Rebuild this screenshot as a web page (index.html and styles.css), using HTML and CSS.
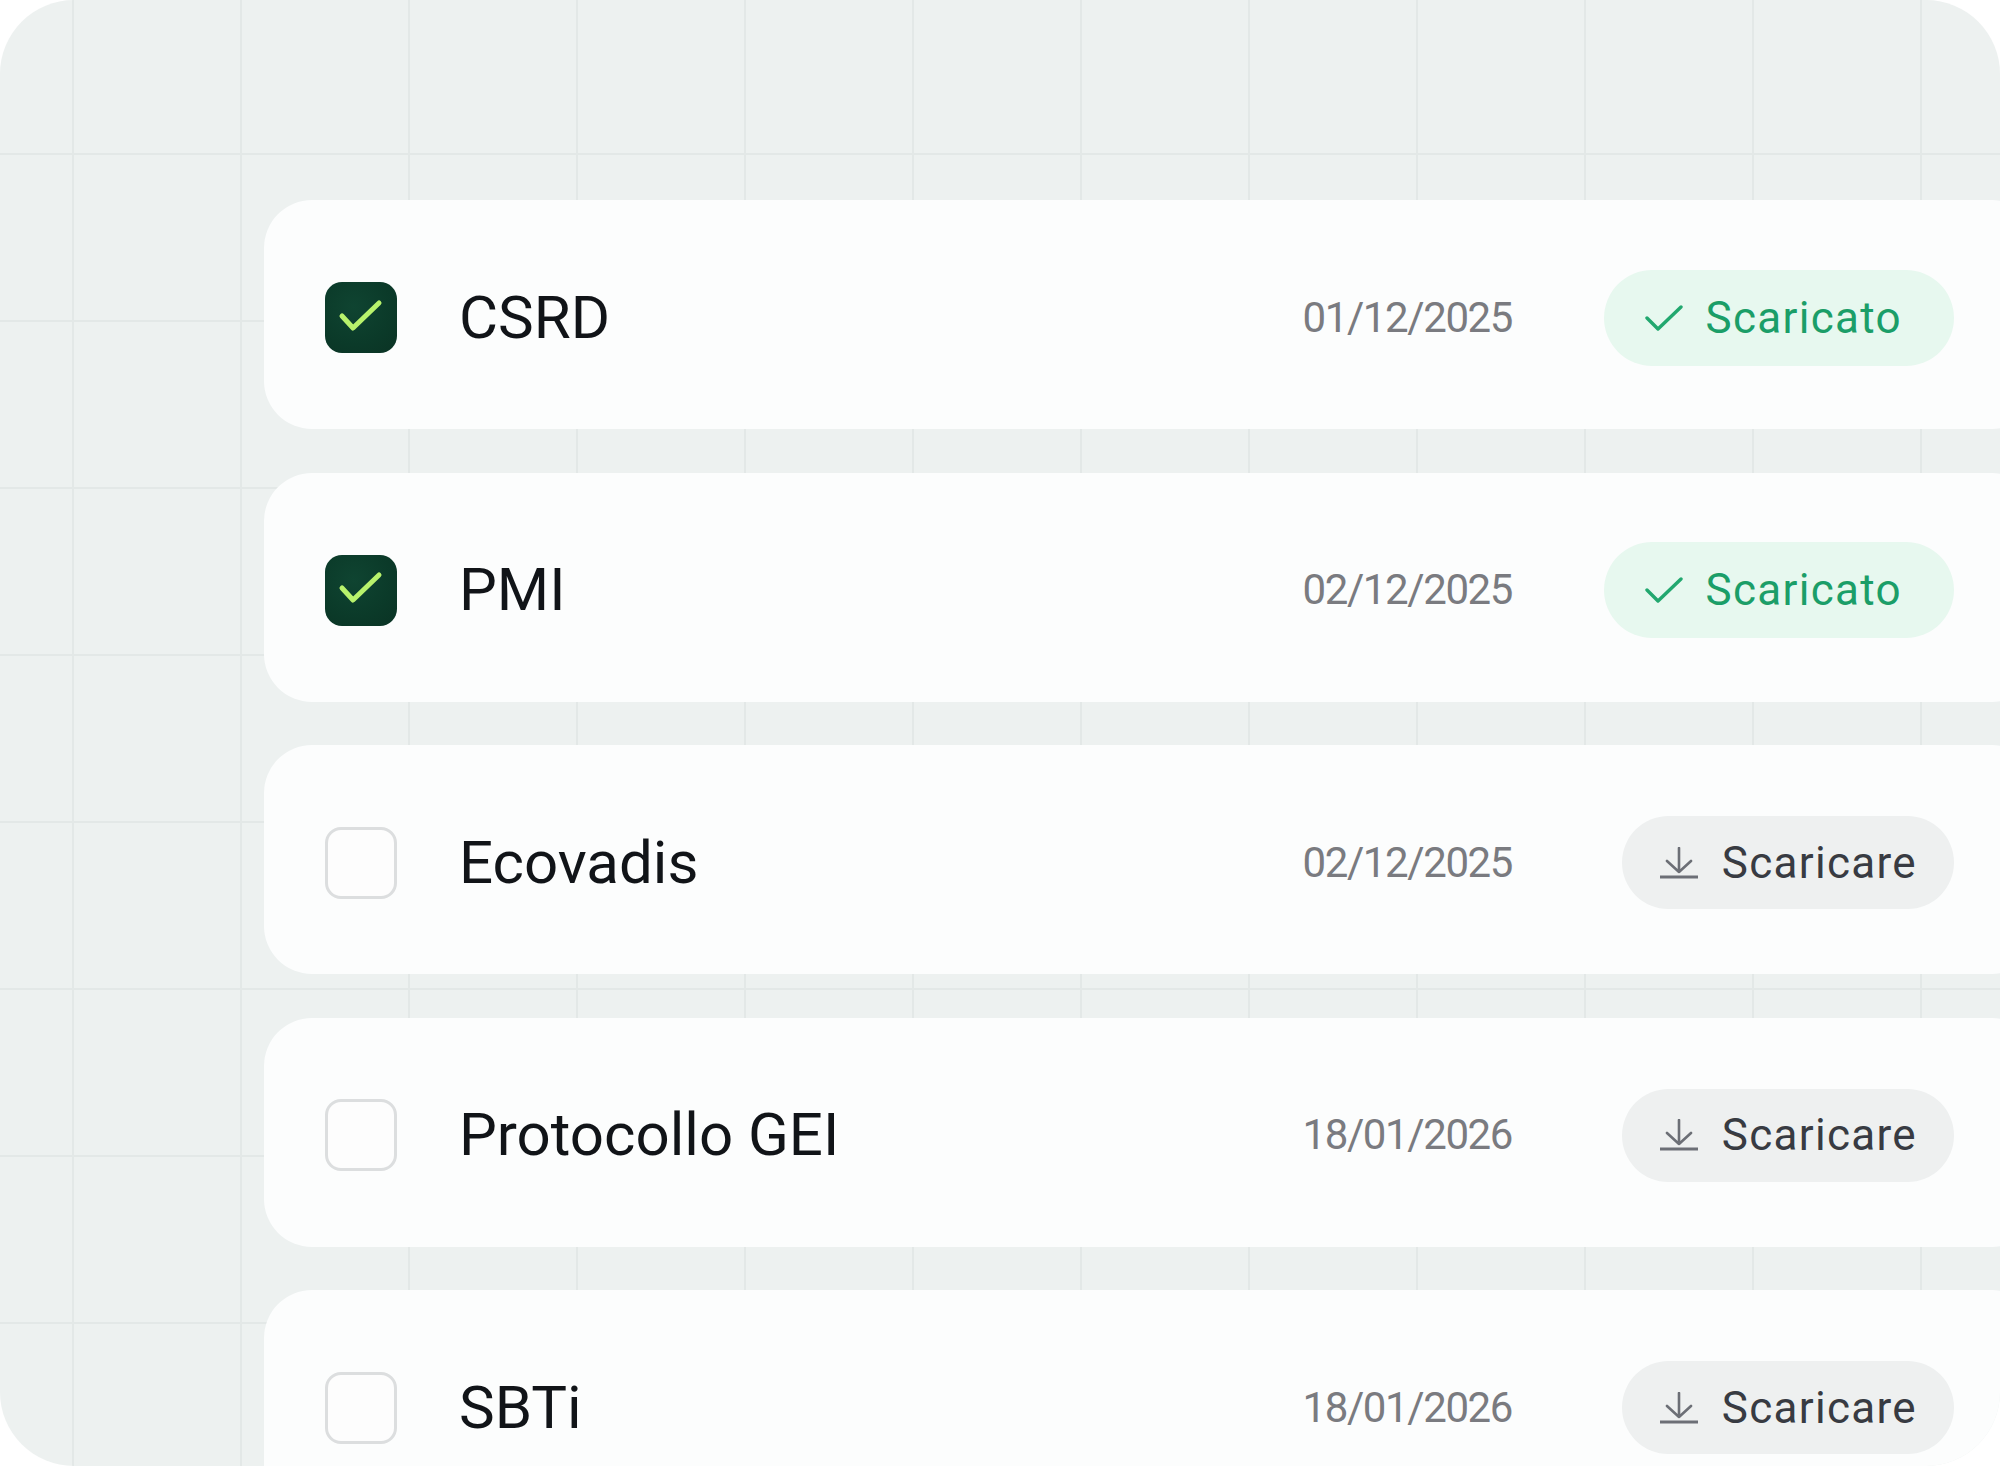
FILE: index.html
```html
<!DOCTYPE html>
<html lang="it">
<head>
<meta charset="utf-8">
<title>Documenti</title>
<link rel="stylesheet" href="styles.css">
</head>
<body>
<div class="frame">
  <div class="list">
    <div class="row">
      <span class="box box--on"><svg viewBox="0 0 72 72" width="72" height="72"><path d="M17 34 L28 46 L54 21" fill="none" stroke="#b8f26c" stroke-width="5" stroke-linecap="round" stroke-linejoin="round"/></svg></span>
      <span class="name">CSRD</span>
      <span class="date">01/12/2025</span>
      <span class="action"><span class="pill pill--done"><svg class="ico-check" viewBox="0 0 38 26" width="38" height="26"><path d="M2 13 L13 24 L36 2" fill="none" stroke="currentColor" stroke-width="3.4" stroke-linecap="round" stroke-linejoin="round"/></svg>Scaricato</span></span>
    </div>
    <div class="row">
      <span class="box box--on"><svg viewBox="0 0 72 72" width="72" height="72"><path d="M17 34 L28 46 L54 21" fill="none" stroke="#b8f26c" stroke-width="5" stroke-linecap="round" stroke-linejoin="round"/></svg></span>
      <span class="name">PMI</span>
      <span class="date">02/12/2025</span>
      <span class="action"><span class="pill pill--done"><svg class="ico-check" viewBox="0 0 38 26" width="38" height="26"><path d="M2 13 L13 24 L36 2" fill="none" stroke="currentColor" stroke-width="3.4" stroke-linecap="round" stroke-linejoin="round"/></svg>Scaricato</span></span>
    </div>
    <div class="row">
      <span class="box"></span>
      <span class="name">Ecovadis</span>
      <span class="date">02/12/2025</span>
      <span class="action"><span class="pill pill--get"><svg class="ico-dl" viewBox="0 0 40 32" width="40" height="32"><path d="M20 1 V25 M8 14 L20 25 L32 14" fill="none" stroke="currentColor" stroke-width="2.6" stroke-linecap="round" stroke-linejoin="round"/><path d="M1 30 H39" stroke="currentColor" stroke-width="3.2"/></svg>Scaricare</span></span>
    </div>
    <div class="row">
      <span class="box"></span>
      <span class="name">Protocollo GEI</span>
      <span class="date">18/01/2026</span>
      <span class="action"><span class="pill pill--get"><svg class="ico-dl" viewBox="0 0 40 32" width="40" height="32"><path d="M20 1 V25 M8 14 L20 25 L32 14" fill="none" stroke="currentColor" stroke-width="2.6" stroke-linecap="round" stroke-linejoin="round"/><path d="M1 30 H39" stroke="currentColor" stroke-width="3.2"/></svg>Scaricare</span></span>
    </div>
    <div class="row">
      <span class="box"></span>
      <span class="name">SBTi</span>
      <span class="date">18/01/2026</span>
      <span class="action"><span class="pill pill--get"><svg class="ico-dl" viewBox="0 0 40 32" width="40" height="32"><path d="M20 1 V25 M8 14 L20 25 L32 14" fill="none" stroke="currentColor" stroke-width="2.6" stroke-linecap="round" stroke-linejoin="round"/><path d="M1 30 H39" stroke="currentColor" stroke-width="3.2"/></svg>Scaricare</span></span>
    </div>
  </div>
</div>
</body>
</html>
```

FILE: styles.css
```css
html, body {
  margin: 0;
  padding: 0;
  background: #ffffff;
}

body {
  font-family: Roboto, "Noto Sans", "Liberation Sans", sans-serif;
}

.frame {
  width: 2000px;
  height: 1466px;
  box-sizing: border-box;
  border-radius: 74px;
  overflow: hidden;
  background-color: #edf1f0;
  background-image:
    linear-gradient(to right, #e3e8e7 2px, transparent 2px),
    linear-gradient(to bottom, #e3e8e7 2px, transparent 2px);
  background-size: 168px 100%, 100% 167px;
  background-position: 72px 0, 0 153px;
  padding: 200px 0 0 264px;
}

.list {
  display: flex;
  flex-direction: column;
  gap: 43.5px;
  margin-right: -40px;
}

.row {
  box-sizing: border-box;
  height: 229px;
  flex: none;
  display: flex;
  align-items: center;
  background: #fcfdfd;
  border-radius: 48px;
  padding: 6px 86px 0 61px;
}

.box {
  width: 66px;
  height: 66px;
  flex: none;
  border: 3px solid #dcdedf;
  border-radius: 16px;
  background: #fdfdfd;
  display: flex;
  align-items: center;
  justify-content: center;
}

.box--on {
  width: 72px;
  height: 71px;
  border: none;
  background: radial-gradient(circle at 40% 35%, #0f4431 0%, #0b3a29 60%, #0a3324 100%);
  border-radius: 17px;
}

.box svg {
  display: block;
}

.name {
  flex: 1;
  margin-left: 62px;
  font-size: 60px;
  line-height: 1;
  color: #111418;
  font-weight: 400;
}

.date {
  font-size: 42px;
  line-height: 1;
  letter-spacing: -1.4px;
  color: #7a7b80;
  text-align: right;
}

.action {
  width: 442px;
  flex: none;
  display: flex;
  justify-content: flex-end;
}

.pill {
  display: flex;
  align-items: center;
  border-radius: 48px;
  font-size: 44px;
  line-height: 1;
  letter-spacing: 1.3px;
  font-weight: 400;
}

.pill--done {
  height: 96px;
  padding: 0 52px 0 41px;
  background: #e7f8ef;
  color: #1b9e68;
}

.pill--get {
  height: 93px;
  padding: 0 37px 0 37px;
  background: #eef0f0;
  color: #383b42;
}

.ico-check {
  display: block;
  margin-right: 23px;
  color: #22a86f;
}

.ico-dl {
  display: block;
  margin-right: 23px;
  color: #6c6f76;
}
```
